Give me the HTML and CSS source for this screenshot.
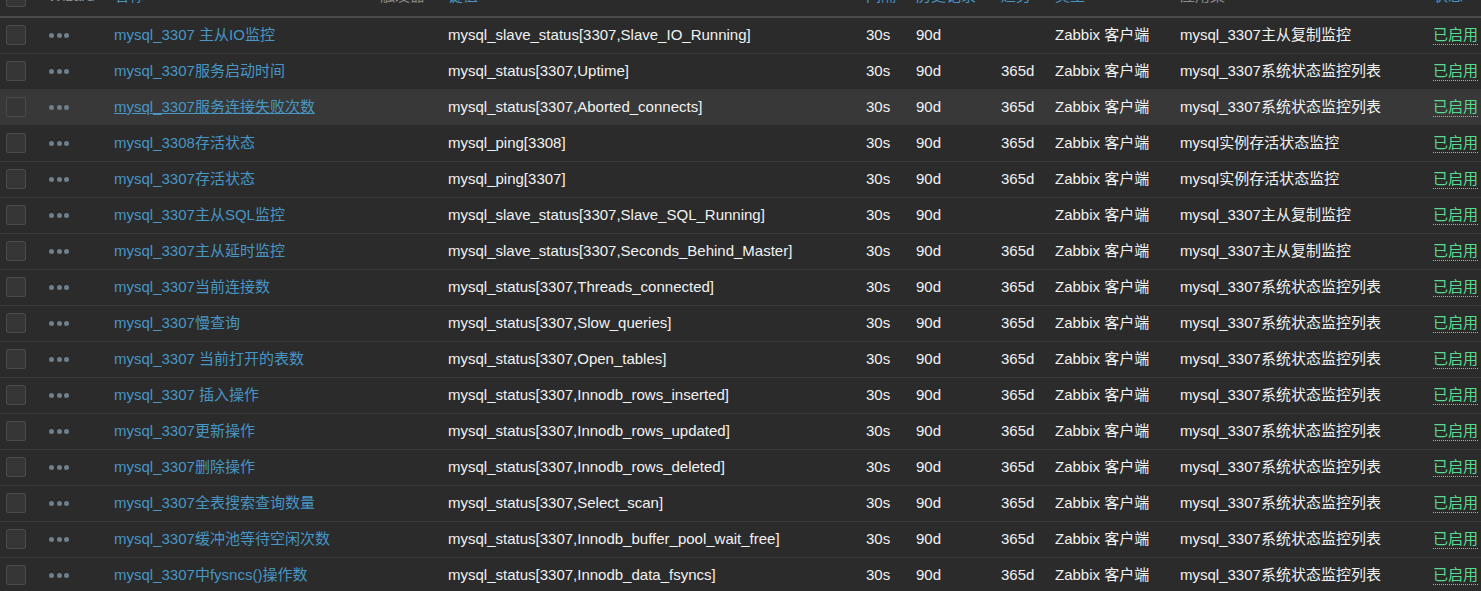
FILE: index.html
```html
<!DOCTYPE html>
<html lang="zh-CN">
<head>
<meta charset="utf-8">
<title>Items</title>
<link rel="stylesheet" href="styles.css">
</head>
<body>
<div class="list-wrap">
<table class="list">
<colgroup>
<col class="c-cb"><col class="c-wz"><col class="c-name"><col class="c-trg"><col class="c-key"><col class="c-int"><col class="c-hist"><col class="c-trend"><col class="c-type"><col class="c-app"><col class="c-status">
</colgroup>
<thead>
<tr>
<th class="th-cb"><span class="cb"></span></th>
<th class="muted">Wizard</th>
<th><a class="link">名称</a><span class="arrow up"></span></th>
<th class="muted">触发器</th>
<th><a class="link">键值</a></th>
<th><a class="link">间隔</a></th>
<th><a class="link">历史记录</a></th>
<th><a class="link">趋势</a></th>
<th><a class="link">类型</a><span class="arrow down"></span></th>
<th class="muted">应用集</th>
<th><a class="link">状态</a></th>
</tr>
</thead>
<tbody>
<tr><td><span class="cb"></span></td><td><span class="dots"><i></i><i></i><i></i></span></td><td><a class="link">mysql_3307 主从IO监控</a></td><td></td><td>mysql_slave_status[3307,Slave_IO_Running]</td><td>30s</td><td>90d</td><td></td><td>Zabbix 客户端</td><td>mysql_3307主从复制监控</td><td><a class="on">已启用</a></td></tr>
<tr><td><span class="cb"></span></td><td><span class="dots"><i></i><i></i><i></i></span></td><td><a class="link">mysql_3307服务启动时间</a></td><td></td><td>mysql_status[3307,Uptime]</td><td>30s</td><td>90d</td><td>365d</td><td>Zabbix 客户端</td><td>mysql_3307系统状态监控列表</td><td><a class="on">已启用</a></td></tr>
<tr class="hover"><td><span class="cb"></span></td><td><span class="dots"><i></i><i></i><i></i></span></td><td><a class="link">mysql_3307服务连接失败次数</a></td><td></td><td>mysql_status[3307,Aborted_connects]</td><td>30s</td><td>90d</td><td>365d</td><td>Zabbix 客户端</td><td>mysql_3307系统状态监控列表</td><td><a class="on">已启用</a></td></tr>
<tr><td><span class="cb"></span></td><td><span class="dots"><i></i><i></i><i></i></span></td><td><a class="link">mysql_3308存活状态</a></td><td></td><td>mysql_ping[3308]</td><td>30s</td><td>90d</td><td>365d</td><td>Zabbix 客户端</td><td>mysql实例存活状态监控</td><td><a class="on">已启用</a></td></tr>
<tr><td><span class="cb"></span></td><td><span class="dots"><i></i><i></i><i></i></span></td><td><a class="link">mysql_3307存活状态</a></td><td></td><td>mysql_ping[3307]</td><td>30s</td><td>90d</td><td>365d</td><td>Zabbix 客户端</td><td>mysql实例存活状态监控</td><td><a class="on">已启用</a></td></tr>
<tr><td><span class="cb"></span></td><td><span class="dots"><i></i><i></i><i></i></span></td><td><a class="link">mysql_3307主从SQL监控</a></td><td></td><td>mysql_slave_status[3307,Slave_SQL_Running]</td><td>30s</td><td>90d</td><td></td><td>Zabbix 客户端</td><td>mysql_3307主从复制监控</td><td><a class="on">已启用</a></td></tr>
<tr><td><span class="cb"></span></td><td><span class="dots"><i></i><i></i><i></i></span></td><td><a class="link">mysql_3307主从延时监控</a></td><td></td><td>mysql_slave_status[3307,Seconds_Behind_Master]</td><td>30s</td><td>90d</td><td>365d</td><td>Zabbix 客户端</td><td>mysql_3307主从复制监控</td><td><a class="on">已启用</a></td></tr>
<tr><td><span class="cb"></span></td><td><span class="dots"><i></i><i></i><i></i></span></td><td><a class="link">mysql_3307当前连接数</a></td><td></td><td>mysql_status[3307,Threads_connected]</td><td>30s</td><td>90d</td><td>365d</td><td>Zabbix 客户端</td><td>mysql_3307系统状态监控列表</td><td><a class="on">已启用</a></td></tr>
<tr><td><span class="cb"></span></td><td><span class="dots"><i></i><i></i><i></i></span></td><td><a class="link">mysql_3307慢查询</a></td><td></td><td>mysql_status[3307,Slow_queries]</td><td>30s</td><td>90d</td><td>365d</td><td>Zabbix 客户端</td><td>mysql_3307系统状态监控列表</td><td><a class="on">已启用</a></td></tr>
<tr><td><span class="cb"></span></td><td><span class="dots"><i></i><i></i><i></i></span></td><td><a class="link">mysql_3307 当前打开的表数</a></td><td></td><td>mysql_status[3307,Open_tables]</td><td>30s</td><td>90d</td><td>365d</td><td>Zabbix 客户端</td><td>mysql_3307系统状态监控列表</td><td><a class="on">已启用</a></td></tr>
<tr><td><span class="cb"></span></td><td><span class="dots"><i></i><i></i><i></i></span></td><td><a class="link">mysql_3307 插入操作</a></td><td></td><td>mysql_status[3307,Innodb_rows_inserted]</td><td>30s</td><td>90d</td><td>365d</td><td>Zabbix 客户端</td><td>mysql_3307系统状态监控列表</td><td><a class="on">已启用</a></td></tr>
<tr><td><span class="cb"></span></td><td><span class="dots"><i></i><i></i><i></i></span></td><td><a class="link">mysql_3307更新操作</a></td><td></td><td>mysql_status[3307,Innodb_rows_updated]</td><td>30s</td><td>90d</td><td>365d</td><td>Zabbix 客户端</td><td>mysql_3307系统状态监控列表</td><td><a class="on">已启用</a></td></tr>
<tr><td><span class="cb"></span></td><td><span class="dots"><i></i><i></i><i></i></span></td><td><a class="link">mysql_3307删除操作</a></td><td></td><td>mysql_status[3307,Innodb_rows_deleted]</td><td>30s</td><td>90d</td><td>365d</td><td>Zabbix 客户端</td><td>mysql_3307系统状态监控列表</td><td><a class="on">已启用</a></td></tr>
<tr><td><span class="cb"></span></td><td><span class="dots"><i></i><i></i><i></i></span></td><td><a class="link">mysql_3307全表搜索查询数量</a></td><td></td><td>mysql_status[3307,Select_scan]</td><td>30s</td><td>90d</td><td>365d</td><td>Zabbix 客户端</td><td>mysql_3307系统状态监控列表</td><td><a class="on">已启用</a></td></tr>
<tr><td><span class="cb"></span></td><td><span class="dots"><i></i><i></i><i></i></span></td><td><a class="link">mysql_3307缓冲池等待空闲次数</a></td><td></td><td>mysql_status[3307,Innodb_buffer_pool_wait_free]</td><td>30s</td><td>90d</td><td>365d</td><td>Zabbix 客户端</td><td>mysql_3307系统状态监控列表</td><td><a class="on">已启用</a></td></tr>
<tr><td><span class="cb"></span></td><td><span class="dots"><i></i><i></i><i></i></span></td><td><a class="link">mysql_3307中fysncs()操作数</a></td><td></td><td>mysql_status[3307,Innodb_data_fsyncs]</td><td>30s</td><td>90d</td><td>365d</td><td>Zabbix 客户端</td><td>mysql_3307系统状态监控列表</td><td><a class="on">已启用</a></td></tr>
</tbody>
</table>
</div>
</body>
</html>
```

FILE: styles.css
```css
html, body {
  margin: 0;
  padding: 0;
  background: #2b2b2b;
  overflow: hidden;
  height: 591px;
}
body {
  font-family: "Liberation Sans", Arial, "Noto Sans CJK SC", sans-serif;
  font-size: 15px;
  color: #f2f2f2;
}
.list-wrap {
  margin-top: -15px;
}
.list {
  width: 1481px;
  table-layout: fixed;
  border-collapse: collapse;
  border-spacing: 0;
}
.c-cb { width: 42px; }
.c-wz { width: 66px; }
.c-name { width: 266px; }
.c-trg { width: 68px; }
.c-key { width: 418px; }
.c-int { width: 50px; }
.c-hist { width: 85px; }
.c-trend { width: 54px; }
.c-type { width: 125px; }
.c-app { width: 253px; }
.c-status { width: 54px; }

.list th {
  height: 32px;
  padding: 0 0 11px 6px;
  box-sizing: border-box;
  vertical-align: bottom;
  text-align: left;
  font-weight: normal;
  line-height: 18px;
  white-space: nowrap;
  border-bottom: 2px solid #4a4a4a;
}
.list th.th-cb { padding-bottom: 9px; }
.list th.muted { color: #8c8c8c; }
.list td {
  height: 36px;
  padding: 0 0 0 6px;
  box-sizing: border-box;
  line-height: 18px;
  white-space: nowrap;
  overflow: hidden;
  border-bottom: 1px solid #383838;
  vertical-align: middle;
}
.list tr.hover td { background: #383838; border-bottom-color: #2b2b2b; }
.list tr.hover .link { text-decoration: underline; }

.link { color: #4796c4; text-decoration: none; }
.on {
  color: #59db8f;
  text-decoration: none;
  border-bottom: 1px dotted #59db8f;
  padding-bottom: 1px;
}

.cb {
  display: block;
  width: 20px;
  height: 20px;
  box-sizing: border-box;
  background: #363636;
  border: 1px solid #4b4b4b;
  border-radius: 2px;
}
.dots {
  display: flex;
  gap: 2.5px;
  padding-left: 1px;
  align-items: center;
}
.dots i {
  display: block;
  width: 5px;
  height: 5px;
  border-radius: 50%;
  background: #6f808c;
}
.arrow {
  display: inline-block;
  width: 0;
  height: 0;
  margin-left: 5px;
  vertical-align: middle;
  border-left: 4px solid transparent;
  border-right: 4px solid transparent;
}
.arrow.up { border-bottom: 5px solid #4796c4; }
.arrow.down { border-top: 5px solid #8c8c8c; }
```
